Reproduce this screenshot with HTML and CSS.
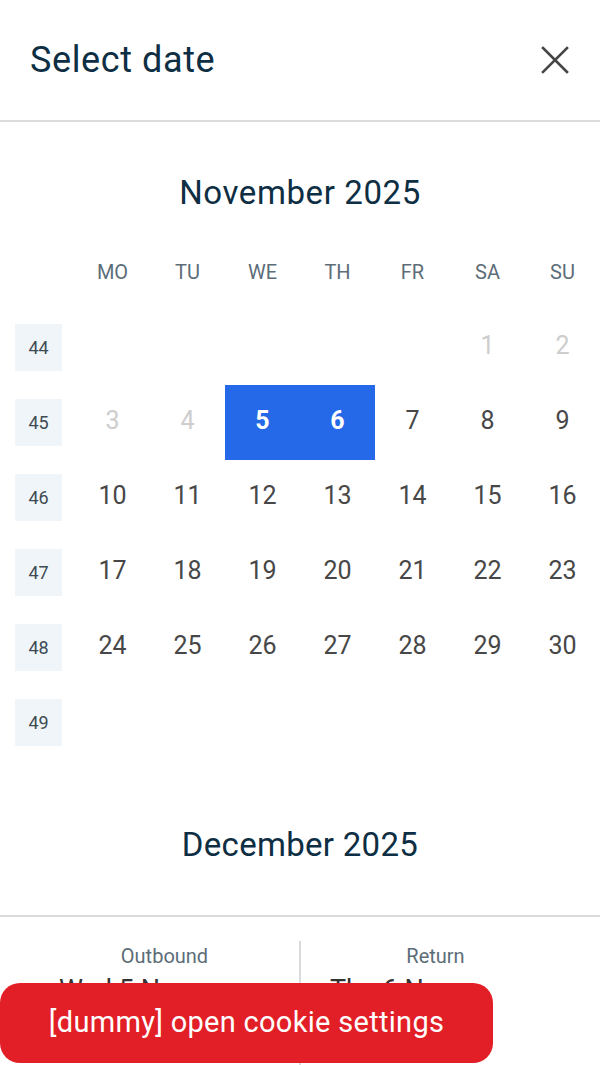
FILE: index.html
```html
<!DOCTYPE html>
<html lang="en">
<head>
<meta charset="utf-8">
<title>Select date</title>
<link rel="stylesheet" href="styles.css">
</head>
<body>
<div class="sheet">
  <header class="head">
    <h1 class="head-title">Select date</h1>
    <button class="close" aria-label="Close">
      <svg width="28" height="28" viewBox="0 0 28 28"><path d="M2 2 L26 26 M26 2 L2 26" stroke="#454545" stroke-width="2.6" fill="none" stroke-linecap="square"/></svg>
    </button>
  </header>

  <main class="scroll">
    <section class="month">
      <h2 class="month-title">November 2025</h2>
      <div class="grid">
        <div class="wk"></div>
        <div class="dow">MO</div><div class="dow">TU</div><div class="dow">WE</div><div class="dow">TH</div><div class="dow">FR</div><div class="dow">SA</div><div class="dow">SU</div>

        <div class="wk"><span>44</span></div>
        <div class="day"></div><div class="day"></div><div class="day"></div><div class="day"></div><div class="day"></div>
        <div class="day off">1</div><div class="day off">2</div>

        <div class="wk"><span>45</span></div>
        <div class="day off">3</div><div class="day off">4</div>
        <div class="day sel">5</div><div class="day sel">6</div>
        <div class="day">7</div><div class="day">8</div><div class="day">9</div>

        <div class="wk"><span>46</span></div>
        <div class="day">10</div><div class="day">11</div><div class="day">12</div><div class="day">13</div><div class="day">14</div><div class="day">15</div><div class="day">16</div>

        <div class="wk"><span>47</span></div>
        <div class="day">17</div><div class="day">18</div><div class="day">19</div><div class="day">20</div><div class="day">21</div><div class="day">22</div><div class="day">23</div>

        <div class="wk"><span>48</span></div>
        <div class="day">24</div><div class="day">25</div><div class="day">26</div><div class="day">27</div><div class="day">28</div><div class="day">29</div><div class="day">30</div>

        <div class="wk"><span>49</span></div>
      </div>
    </section>
    <section class="month">
      <h2 class="month-title next">December 2025</h2>
    </section>
  </main>

  <footer class="foot">
    <div class="trip">
      <div class="trip-label">Outbound</div>
      <div class="trip-value">Wed 5 Nov</div>
    </div>
    <div class="trip trip-right">
      <div class="trip-label">Return</div>
      <div class="trip-value">Thu 6 Nov</div>
    </div>
  </footer>

  <button class="cookie">[dummy] open cookie settings</button>
</div>
</body>
</html>
```

FILE: styles.css
```css
* { box-sizing: border-box; }
html, body { margin: 0; padding: 0; background: #fff; }
body {
  font-family: Roboto, "Liberation Sans", sans-serif;
  color: #444;
}
.sheet {
  position: relative;
  width: 600px;
  height: 1065px;
  display: flex;
  flex-direction: column;
  overflow: hidden;
}
.head {
  height: 122px;
  flex: none;
  display: flex;
  align-items: center;
  justify-content: space-between;
  padding: 0 31px 0 30px;
  border-bottom: 2px solid #d9dbdd;
}
.head-title {
  margin: 0;
  font-size: 36px;
  font-weight: 400;
  letter-spacing: 0.6px;
  color: #0e2e43;
  padding-bottom: 0;
}
.close {
  border: 0;
  background: none;
  padding: 0;
  width: 28px;
  height: 28px;
  display: flex;
}
.scroll {
  flex: 1;
  overflow: hidden;
}
.month-title {
  margin: 50px 0 21px;
  height: 42px;
  line-height: 42px;
  text-align: center;
  font-size: 33px;
  font-weight: 400;
  letter-spacing: 0.6px;
  color: #0e2e43;
}
.month-title.next { margin-top: 64px; letter-spacing: 0.3px; }
.grid {
  display: grid;
  grid-template-columns: repeat(8, 75px);
  grid-auto-rows: 75px;
}
.dow {
  display: flex;
  align-items: center;
  justify-content: center;
  font-size: 20px;
  color: #5c6d78;
  padding-bottom: 2px;
}
.wk {
  display: flex;
  align-items: center;
  justify-content: center;
  padding-left: 2px;
}
.wk span {
  width: 47px;
  height: 47px;
  display: flex;
  align-items: center;
  justify-content: center;
  background: #f0f5f9;
  font-size: 18px;
  color: #3e4b53;
  padding-bottom: 1px;
}
.day {
  display: flex;
  align-items: center;
  justify-content: center;
  font-size: 25px;
  color: #474747;
  padding-bottom: 4px;
}
.day.off { color: #cdcdcd; }
.day.sel {
  background: #2569e8;
  color: #fff;
  font-weight: 700;
}
.foot {
  flex: none;
  height: 150px;
  border-top: 2px solid #d9dbdd;
  display: flex;
  padding: 24px 30px 0;
}
.trip {
  flex: 1;
  padding-top: 2px;
}
.trip-right { border-left: 2px solid #d9dbdd; }
.trip-label {
  font-size: 20px;
  color: #5c6d78;
  line-height: 26px;
  text-align: center;
}
.trip-value {
  font-size: 27px;
  color: #333;
  line-height: 36px;
  padding-left: 29px;
  margin-top: 3px;
}
.cookie {
  position: absolute;
  left: 0;
  top: 983px;
  width: 493px;
  height: 80px;
  border: 0;
  border-radius: 20px;
  background: #e21e26;
  color: #fff;
  font-family: Roboto, "Liberation Sans", sans-serif;
  font-size: 29px;
  letter-spacing: 0.3px;
  padding: 0 0 2px;
}
```
